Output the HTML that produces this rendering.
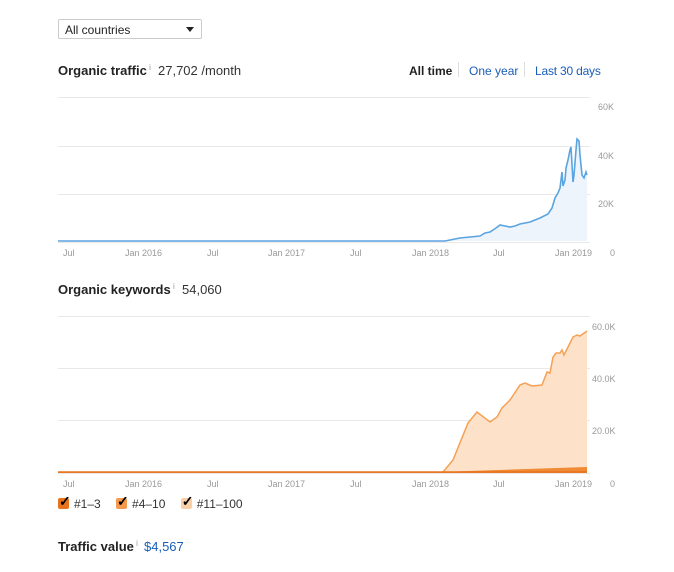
<!DOCTYPE html>
<html><head><meta charset="utf-8"><style>
body{margin:0;width:674px;height:572px;background:#fff;font-family:"Liberation Sans",sans-serif;position:relative;overflow:hidden}
.a{position:absolute;white-space:nowrap}
.sel{left:58px;top:19px;width:144px;height:20px;border:1px solid #ccc;border-radius:2px;font-size:12px;color:#222;box-sizing:border-box;padding:3px 6px}
.h{font-size:13px;font-weight:bold;color:#222}
.i{font-size:8px;color:#999;font-weight:normal;vertical-align:top}
.v{font-size:13px;color:#333}
.l{font-size:12px;color:#1a5eb8}
.cb{display:inline-block;width:11px;height:11px;border-radius:2px;vertical-align:-1px;position:relative;margin-right:5px}
.cb:after{content:"✓";position:absolute;left:1px;top:-5px;font-size:14px;color:#000;font-weight:bold}
</style></head><body>
<div class="a sel">All countries<span style="position:absolute;right:7px;top:7px;border-left:4px solid transparent;border-right:4px solid transparent;border-top:5px solid #222"></span></div>
<div class="a h" style="left:58px;top:63px">Organic traffic<span class="i"> i</span></div>
<div class="a v" style="left:158px;top:63px">27,702 /month</div>
<div class="a" style="left:409px;top:64px;font-size:12px;font-weight:bold;color:#222">All time</div>
<div class="a" style="left:458px;top:62px;width:1px;height:15px;background:#ddd"></div>
<div class="a l" style="left:469px;top:64px">One year</div>
<div class="a" style="left:524px;top:62px;width:1px;height:15px;background:#ddd"></div>
<div class="a l" style="left:535px;top:64px;letter-spacing:-0.2px">Last 30 days</div>
<div class="a h" style="left:58px;top:282px">Organic keywords<span class="i"> i</span></div>
<div class="a v" style="left:182px;top:282px">54,060</div>
<div class="a" style="left:58px;top:497px;font-size:12px;color:#333"><span class="cb" style="background:#e8731c"></span>#1–3 <span style="display:inline-block;width:12px"></span><span class="cb" style="background:#f59a4c"></span>#4–10 <span style="display:inline-block;width:12px"></span><span class="cb" style="background:#fbd0a8"></span>#11–100</div>
<div class="a h" style="left:58px;top:539px">Traffic value<span class="i"> i</span></div>
<div class="a" style="left:144px;top:539px;font-size:13px;color:#1a5eb8">$4,567</div>
<svg class="a" style="left:0;top:0" width="674" height="572" font-family="Liberation Sans" font-size="9" fill="#999">
<g stroke="#e8e8e8" stroke-width="1"><line x1="58" y1="97.5" x2="590" y2="97.5"/><line x1="58" y1="146.5" x2="590" y2="146.5"/><line x1="58" y1="194.5" x2="590" y2="194.5"/><line x1="58" y1="242.5" x2="590" y2="242.5"/>
<line x1="58" y1="316.5" x2="590" y2="316.5"/><line x1="58" y1="368.5" x2="590" y2="368.5"/><line x1="58" y1="420.5" x2="590" y2="420.5"/><line x1="58" y1="473.5" x2="590" y2="473.5"/></g>
<text x="598" y="110">60K</text><text x="598" y="159">40K</text><text x="598" y="207">20K</text><text x="610" y="256">0</text>
<text x="592" y="330">60.0K</text><text x="592" y="382">40.0K</text><text x="592" y="434">20.0K</text><text x="610" y="487">0</text>
<g><text x="63" y="256">Jul</text><text x="125" y="256">Jan 2016</text><text x="207" y="256">Jul</text><text x="268" y="256">Jan 2017</text><text x="350" y="256">Jul</text><text x="412" y="256">Jan 2018</text><text x="493" y="256">Jul</text><text x="555" y="256">Jan 2019</text></g>
<g><text x="63" y="487">Jul</text><text x="125" y="487">Jan 2016</text><text x="207" y="487">Jul</text><text x="268" y="487">Jan 2017</text><text x="350" y="487">Jul</text><text x="412" y="487">Jan 2018</text><text x="493" y="487">Jul</text><text x="555" y="487">Jan 2019</text></g>
<path d="M58,241 L445,241 L460,238 L480,236 L485,233 L490,232 L496,228 L500,225 L510,227 L515,226 L520,224 L530,222 L540,218 L548,214 L552,208 L555,198 L558,193 L560,188 L562,172 L563,186 L565,180 L566,168 L568,160 L570,150 L571,147 L573,182 L574,175 L576,150 L577,139 L579,141 L580,155 L582,175 L584,178 L586,172 L587,175 L587,241 Z" fill="#eef4fc"/>
<path d="M58,241 L445,241 L460,238 L480,236 L485,233 L490,232 L496,228 L500,225 L510,227 L515,226 L520,224 L530,222 L540,218 L548,214 L552,208 L555,198 L558,193 L560,188 L562,172 L563,186 L565,180 L566,168 L568,160 L570,150 L571,147 L573,182 L574,175 L576,150 L577,139 L579,141 L580,155 L582,175 L584,178 L586,172 L587,175" fill="none" stroke="#5aa4e0" stroke-width="1.6"/>
<path d="M58,472 L443,472 L453,460 L468,423 L477,412 L490,422 L497,417 L502,408 L510,400 L520,385 L525,383 L532,386 L542,385 L547,372 L550,373 L553,357 L556,353 L560,353 L562,350 L564,355 L573,337 L577,335 L580,336 L587,331 L587,472 Z" fill="#fde2c9"/>
<path d="M443,472 L453,460 L468,423 L477,412 L490,422 L497,417 L502,408 L510,400 L520,385 L525,383 L532,386 L542,385 L547,372 L550,373 L553,357 L556,353 L560,353 L562,350 L564,355 L573,337 L577,335 L580,336 L587,331" fill="none" stroke="#f5a055" stroke-width="1.5"/>
<path d="M58,472 L440,472 L587,467 L587,473 L58,473 Z" fill="#f08a35"/>
<line x1="58" y1="472" x2="587" y2="472" stroke="#e8731c" stroke-width="1.5"/>
</svg>
</body></html>
